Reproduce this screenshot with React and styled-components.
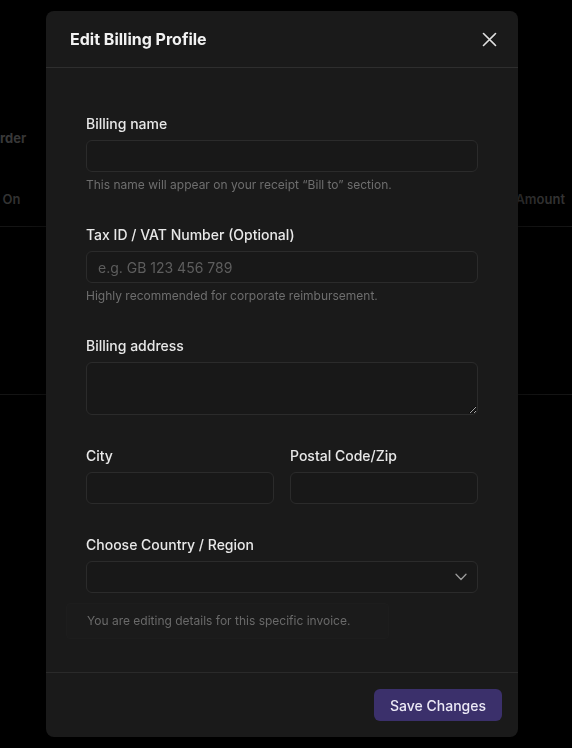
import React from "react";
import styled, { createGlobalStyle } from "styled-components";

const Global = createGlobalStyle`
  html, body { margin: 0; padding: 0; background: #000; overflow: hidden; }
  body { font-family: Inter, "Noto Sans", "Liberation Sans", sans-serif; -webkit-font-smoothing: antialiased; }
  * { box-sizing: border-box; }
`;

const Backdrop = styled.div`
  width: 600px;
  margin-left: -28px;
  height: 748px;
  padding-top: 128px;
  background: #000;
  color: #363636;
`;

const PageHeading = styled.h2`
  margin: 0 0 0 18px;
  font-size: 13px;
  line-height: 20px;
  font-weight: 700;
  color: #3a3a3a;
`;

const TableHead = styled.div`
  margin-top: 24px;
  height: 55px;
  display: flex;
  align-items: center;
  justify-content: space-between;
  padding: 0 7px 0 0;
  border-bottom: 1px solid #151515;
`;

const HeadCell = styled.span`
  font-size: 13px;
  font-weight: 600;
  line-height: 18px;
  color: #343434;
`;

const TableRow = styled.div`
  height: 168px;
  border-bottom: 1px solid #151515;
`;

const Overlay = styled.div`
  position: fixed;
  inset: 0;
  display: flex;
  align-items: flex-start;
  justify-content: flex-start;
  padding: 11px 0 0 46px;
`;

const Modal = styled.div`
  width: 472px;
  background: #1a1a1a;
  border-radius: 8px;
  display: flex;
  flex-direction: column;
  overflow: hidden;
  box-shadow: 0 10px 40px rgba(0, 0, 0, 0.6);
`;

const Header = styled.div`
  height: 57px;
  display: flex;
  align-items: center;
  justify-content: space-between;
  padding: 0 17px 0 24px;
  border-bottom: 1px solid #2e2e2e;
`;

const Title = styled.h1`
  margin: 0;
  font-size: 16px;
  font-weight: 700;
  line-height: 22px;
  color: #f2f2f2;
`;

const CloseButton = styled.button`
  width: 24px;
  height: 24px;
  padding: 0;
  border: 0;
  background: transparent;
  display: flex;
  align-items: center;
  justify-content: center;
  color: #e0e0e0;
  cursor: pointer;
`;

const Body = styled.div`
  padding: 46px 40px 33px;
  display: flex;
  flex-direction: column;
  gap: 31px;
`;

const Field = styled.div`
  display: flex;
  flex-direction: column;
  min-width: 0;
`;

const Row = styled.div`
  display: grid;
  grid-template-columns: 1fr 1fr;
  gap: 16px;
`;

const Label = styled.label`
  font-size: 14px;
  font-weight: 500;
  line-height: 20px;
  color: #e8e8e8;
  margin-bottom: 6px;
`;

const inputBase = `
  width: 100%;
  background: #181818;
  border: 1px solid #2b2b2b;
  border-radius: 6px;
  color: #e8e8e8;
  font-family: Inter, "Noto Sans", "Liberation Sans", sans-serif;
  font-size: 14px;
  outline: none;
  color-scheme: dark;
  &::placeholder { color: #5e5e5e; }
`;

const Input = styled.input`
  ${inputBase}
  height: 32px;
  padding: 0 11px;
`;

const TextArea = styled.textarea`
  ${inputBase}
  height: 53px;
  padding: 8px 11px;
  resize: vertical;
  display: block;
`;

const SelectBox = styled.div`
  ${inputBase}
  height: 32px;
  display: flex;
  align-items: center;
  justify-content: flex-end;
  padding: 0 10px;
  color: #9a9a9a;
`;

const Help = styled.p`
  margin: 4px 0 0;
  font-size: 12px;
  line-height: 18px;
  color: #6e6e6e;
`;

const NoteGroup = styled.div`
  display: flex;
  flex-direction: column;
  gap: 10px;
`;

const Note = styled.p`
  align-self: flex-start;
  margin: 0 0 0 -20px;
  padding: 8px 38px 8px 20px;
  font-size: 12px;
  line-height: 18px;
  color: #6a6a6a;
  background: #1b1b1b;
  border: 1px solid #1d1d1d;
  border-radius: 4px;
`;

const Footer = styled.div`
  border-top: 1px solid #2a2a2a;
  padding: 16px 16px;
  display: flex;
  justify-content: flex-end;
`;

const PrimaryButton = styled.button`
  height: 32px;
  width: 128px;
  border: 0;
  border-radius: 6px;
  background: #3b306b;
  color: #ece9f6;
  font-family: Inter, "Noto Sans", "Liberation Sans", sans-serif;
  font-size: 14px;
  font-weight: 500;
  cursor: pointer;
`;

const XIcon = () => (
  <svg width="15" height="15" viewBox="0 0 15 15" fill="none">
    <path d="M1.5 1.5L13.5 13.5M13.5 1.5L1.5 13.5" stroke="currentColor" strokeWidth="1.6" strokeLinecap="round" />
  </svg>
);

const Chevron = () => (
  <svg width="12" height="8" viewBox="0 0 12 8" fill="none">
    <path d="M1 1.2L6 6.5L11 1.2" stroke="currentColor" strokeWidth="1.3" strokeLinecap="round" strokeLinejoin="round" />
  </svg>
);

export default function App() {
  return (
    <>
      <Global />
      <Backdrop>
        <PageHeading>Order</PageHeading>
        <TableHead>
          <HeadCell>Paid On</HeadCell>
          <HeadCell>Amount</HeadCell>
        </TableHead>
        <TableRow />
      </Backdrop>
      <Overlay>
        <Modal role="dialog" aria-labelledby="dlg-title">
          <Header>
            <Title id="dlg-title">Edit Billing Profile</Title>
            <CloseButton aria-label="Close"><XIcon /></CloseButton>
          </Header>
          <Body>
            <Field>
              <Label>Billing name</Label>
              <Input />
              <Help>This name will appear on your receipt “Bill to” section.</Help>
            </Field>
            <Field>
              <Label>Tax ID / VAT Number (Optional)</Label>
              <Input placeholder="e.g. GB 123 456 789" />
              <Help>Highly recommended for corporate reimbursement.</Help>
            </Field>
            <Field>
              <Label>Billing address</Label>
              <TextArea />
            </Field>
            <Row>
              <Field>
                <Label>City</Label>
                <Input />
              </Field>
              <Field>
                <Label>Postal Code/Zip</Label>
                <Input />
              </Field>
            </Row>
            <NoteGroup>
              <Field>
                <Label>Choose Country / Region</Label>
                <SelectBox><Chevron /></SelectBox>
              </Field>
              <Note>You are editing details for this specific invoice.</Note>
            </NoteGroup>
          </Body>
          <Footer>
            <PrimaryButton>Save Changes</PrimaryButton>
          </Footer>
        </Modal>
      </Overlay>
    </>
  );
}
